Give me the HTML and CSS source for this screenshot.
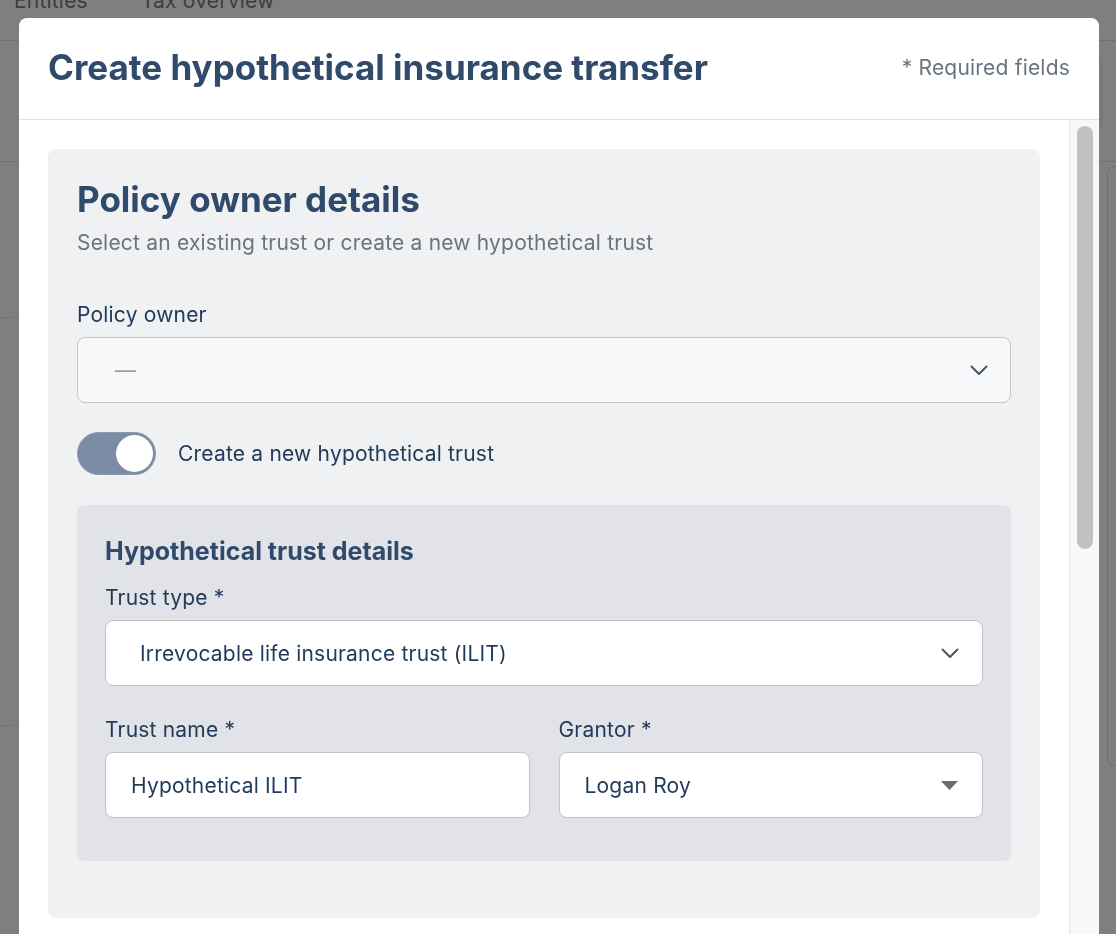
FILE: index.html
```html
<!DOCTYPE html>
<html lang="en">
<head>
  <meta charset="UTF-8" />
  <title>Create hypothetical insurance transfer</title>
  <link rel="stylesheet" href="styles.css">
</head>
<body>
  <!-- page underneath the dialog -->
  <div class="page">
    <nav class="tabs">
      <span class="tab">Entities</span>
      <span class="tab">Tax overview</span>
    </nav>
    <div class="toolbar">
      <div class="toolbar-box"></div>
    </div>
    <div class="content">
      <div class="chart">
        <div class="grid-line"></div>
        <div class="grid-line"></div>
      </div>
      <div class="side-card"></div>
    </div>
  </div>

  <div class="overlay">
    <div class="modal">
      <header class="modal-header">
        <h1>Create hypothetical insurance transfer</h1>
        <span class="required-note">* Required fields</span>
      </header>

      <div class="modal-body">
        <div class="modal-scroll">
          <section class="card">
            <h2>Policy owner details</h2>
            <p class="subtitle">Select an existing trust or create a new hypothetical trust</p>

            <label class="field-label">Policy owner</label>
            <div class="select select-muted">
              <span class="placeholder">—</span>
              <svg class="chevron" width="18" height="11" viewBox="0 0 18 11"><path d="M1.5 1.5 9 9l7.5-7.5" fill="none" stroke="#4b5563" stroke-width="2" stroke-linecap="round" stroke-linejoin="round"/></svg>
            </div>

            <div class="toggle-row">
              <span class="toggle on"><span class="knob"></span></span>
              <span class="toggle-label">Create a new hypothetical trust</span>
            </div>

            <div class="subcard">
              <h3>Hypothetical trust details</h3>

              <label class="field-label">Trust type *</label>
              <div class="select select-wide">
                <span class="value">Irrevocable life insurance trust (ILIT)</span>
                <svg class="chevron" width="18" height="11" viewBox="0 0 18 11"><path d="M1.5 1.5 9 9l7.5-7.5" fill="none" stroke="#4b5563" stroke-width="2" stroke-linecap="round" stroke-linejoin="round"/></svg>
              </div>

              <div class="field-row">
                <div class="field">
                  <label class="field-label">Trust name *</label>
                  <div class="input"><span class="value">Hypothetical ILIT</span></div>
                </div>
                <div class="field">
                  <label class="field-label">Grantor *</label>
                  <div class="select select-native">
                    <span class="value">Logan Roy</span>
                    <svg class="caret" width="17" height="9" viewBox="0 0 17 9"><path d="M0 0h17L8.5 9z" fill="#6b6b6b"/></svg>
                  </div>
                </div>
              </div>
            </div>
          </section>
        </div>

        <div class="scroll-rail"><div class="scroll-thumb"></div></div>
      </div>
    </div>
  </div>
</body>
</html>
```

FILE: styles.css
```css
* {
  box-sizing: border-box;
}
body {
  margin: 0;
  font-family: Inter, "Noto Sans", Arial, sans-serif;
  background-color: #ffffff;
  overflow: hidden;
}

/* background page */
.page {
  height: 934px;
}
.tabs {
  height: 41px;
  display: flex;
  gap: 53px;
  padding-left: 14px;
  border-bottom: 1px solid #e2e2e2;
  overflow: hidden;
}
.tab {
  margin-top: -11px;
  font-size: 21px;
  line-height: 24px;
  letter-spacing: 0.2px;
  color: #7a7a7a;
}
.toolbar {
  height: 121px;
  display: flex;
  justify-content: flex-end;
  align-items: flex-start;
  padding-right: 14px;
  border-bottom: 1px solid #e2e2e2;
}
.toolbar-box {
  margin-top: 17px;
  width: 120px;
  height: 73px;
  border: 1px solid #dcdcdc;
  border-radius: 8px;
}
.content {
  display: flex;
  justify-content: space-between;
  padding-top: 4px;
}
.chart {
  padding-top: 151px;
  width: 300px;
}
.grid-line {
  border-top: 1px dashed #d8d8d8;
  margin-bottom: 407px;
}
.side-card {
  width: 120px;
  height: 600px;
  margin-right: -111px;
  border: 1px solid #dcdcdc;
  border-radius: 8px;
}

/* dialog */
.overlay {
  position: fixed;
  inset: 0;
  background: rgba(0, 0, 0, 0.5);
  overflow: hidden;
}
.modal {
  margin: 18px 0 0 19px;
  width: 1080px;
  height: 1000px;
  background: #ffffff;
  border-radius: 8px;
  display: flex;
  flex-direction: column;
  overflow: hidden;
}
.modal-header {
  height: 102px;
  flex: none;
  display: flex;
  align-items: center;
  justify-content: space-between;
  padding: 0 29px 3px;
  border-bottom: 1px solid #e4e4e4;
}
.modal-header h1 {
  margin: 0;
  font-size: 35px;
  font-weight: 700;
  color: #2f4a6a;
}
.required-note {
  font-size: 21px;
  letter-spacing: 0.2px;
  color: #6b7280;
  margin-top: 1px;
}

.modal-body {
  flex: 1;
  display: flex;
  min-height: 0;
}
.modal-scroll {
  flex: 1;
  padding: 29px 29px 0 29px;
}
.scroll-rail {
  width: 30px;
  flex: none;
  background: #f8f8f8;
  border-left: 1px solid #e6e6e6;
}
.scroll-thumb {
  margin: 6px 0 0 7px;
  width: 16px;
  height: 423px;
  border-radius: 8px;
  background: #c1c1c1;
}

.card {
  background: #f0f1f3;
  border-radius: 8px;
  padding: 28px 29px 57px 29px;
}
.card h2 {
  margin: 0;
  font-size: 35px;
  line-height: 44px;
  font-weight: 700;
  color: #2f4a6a;
}
.subtitle {
  margin: 8px 0 44px;
  font-size: 21px;
  line-height: 28px;
  letter-spacing: 0.2px;
  color: #6b7280;
}
.field-label {
  display: block;
  font-size: 21px;
  line-height: 28px;
  letter-spacing: 0.2px;
  color: #213b5a;
  margin-bottom: 8px;
}

.select, .input {
  height: 66px;
  border: 1px solid #c4c4c4;
  border-radius: 8px;
  background: #ffffff;
  display: flex;
  align-items: center;
  justify-content: space-between;
  font-size: 21px;
  letter-spacing: 0.2px;
  color: #1f3a5b;
}
.select-muted {
  background: #f7f8fa;
  padding: 0 22px 0 37px;
}
.placeholder {
  color: #9a9a9a;
}
.select-wide {
  padding: 0 23px 0 34px;
}
.select-native {
  padding: 0 24px 0 25px;
}
.input {
  padding: 0 25px;
}

.toggle-row {
  display: flex;
  align-items: center;
  gap: 22px;
  margin: 29px 0 30px;
}
.toggle {
  width: 79px;
  height: 43px;
  border-radius: 22px;
  background: #7b8ca4;
  border: 1px solid #8899b0;
  display: flex;
  align-items: center;
  justify-content: flex-end;
  padding-right: 2px;
}
.knob {
  width: 37px;
  height: 37px;
  border-radius: 50%;
  background: #ffffff;
}
.toggle-label {
  font-size: 21px;
  letter-spacing: 0.2px;
  color: #213b5a;
}

.subcard {
  background: #e1e3e8;
  border-radius: 8px;
  padding: 28px 28px 43px 28px;
}
.subcard h3 {
  margin: 0 0 15px;
  font-size: 25px;
  line-height: 36px;
  font-weight: 700;
  color: #2f4a6a;
}
.field-row {
  display: flex;
  gap: 29px;
  margin-top: 30px;
}
.field {
  flex: 1;
}
```
